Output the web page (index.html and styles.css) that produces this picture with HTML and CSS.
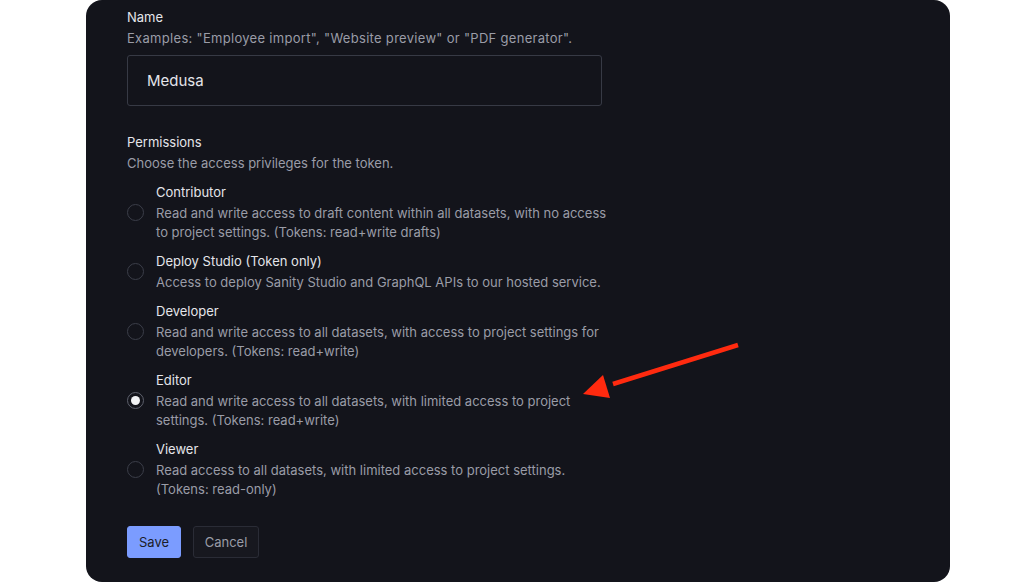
FILE: index.html
```html
<!DOCTYPE html>
<html>
<head>
<meta charset="utf-8">
<link rel="stylesheet" href="styles.css">
</head>
<body>
<div class="panel">
  <div class="field">
    <div class="label">Name</div>
    <div class="hint wide">Examples: "Employee import", "Website preview" or "PDF generator".</div>
    <div class="input">Medusa</div>
  </div>
  <div class="field perms">
    <div class="label">Permissions</div>
    <div class="hint">Choose the access privileges for the token.</div>
    <div class="options">
      <div class="option">
        <span class="radio"></span>
        <div class="text">
          <div class="title">Contributor</div>
          <div class="desc">Read and write access to draft content within all datasets, with no access to project settings. (Tokens: read+write drafts)</div>
        </div>
      </div>
      <div class="option">
        <span class="radio"></span>
        <div class="text">
          <div class="title">Deploy Studio (Token only)</div>
          <div class="desc">Access to deploy Sanity Studio and GraphQL APIs to our hosted service.</div>
        </div>
      </div>
      <div class="option">
        <span class="radio"></span>
        <div class="text">
          <div class="title">Developer</div>
          <div class="desc">Read and write access to all datasets, with access to project settings for developers. (Tokens: read+write)</div>
        </div>
      </div>
      <div class="option">
        <span class="radio checked"></span>
        <div class="text">
          <div class="title">Editor</div>
          <div class="desc">Read and write access to all datasets, with limited access to project settings. (Tokens: read+write)</div>
        </div>
      </div>
      <div class="option">
        <span class="radio"></span>
        <div class="text">
          <div class="title">Viewer</div>
          <div class="desc">Read access to all datasets, with limited access to project settings. (Tokens: read-only)</div>
        </div>
      </div>
    </div>
  </div>
  <div class="actions">
    <button class="btn primary">Save</button>
    <button class="btn secondary">Cancel</button>
  </div>
  <svg class="arrow" width="170" height="70" viewBox="0 0 170 70">
    <line x1="155" y1="14" x2="30" y2="53" stroke="#ff2a0f" stroke-width="4.5"/>
    <polygon points="0,63 20,44 27,67" fill="#ff2a0f"/>
  </svg>
</div>
</body>
</html>
```
FILE: styles.css
```css
html, body {
  margin: 0;
  padding: 0;
  background: #ffffff;
}
body {
  font-family: Inter, "Liberation Sans", sans-serif;
  font-size: 13px;
  width: 1035px;
  height: 582px;
  overflow: hidden;
}
.panel {
  position: relative;
  margin-left: 86px;
  width: 864px;
  height: 582px;
  box-sizing: border-box;
  background: #13141b;
  border-radius: 16px;
  padding: 7px 41px 0 41px;
}
.label {
  color: #e4e5ea;
  line-height: 20px;
}
.hint {
  color: #9a9ca7;
  line-height: 20px;
  margin-top: 1px;
}
.hint.wide {
  letter-spacing: 0.3px;
}
.input {
  margin-top: 7px;
  width: 475px;
  height: 51px;
  box-sizing: border-box;
  border: 1px solid #373a45;
  border-radius: 3px;
  padding-left: 19px;
  display: flex;
  align-items: center;
  color: #e4e5ea;
  font-size: 15px;
}
.perms {
  margin-top: 26px;
}
.options {
  margin-top: 9px;
  display: flex;
  flex-direction: column;
  gap: 9px;
}
.option {
  display: flex;
  align-items: center;
  gap: 12px;
}
.radio {
  flex: none;
  width: 17px;
  height: 17px;
  box-sizing: border-box;
  border: 1px solid #3b3e49;
  border-radius: 50%;
  display: flex;
  align-items: center;
  justify-content: center;
}
.radio.checked {
  border-color: #5d606c;
}
.radio.checked::after {
  content: "";
  width: 9px;
  height: 9px;
  border-radius: 50%;
  background: #f2f3f5;
}
.text {
  width: 456px;
}
.title {
  color: #e4e5ea;
  line-height: 20px;
}
.desc {
  color: #9a9ca7;
  line-height: 19px;
  margin-top: 2px;
}
.actions {
  margin-top: 27px;
  display: flex;
  gap: 12px;
}
.btn {
  font-family: Inter, "Liberation Sans", sans-serif;
  font-size: 13px;
  height: 32px;
  border-radius: 3px;
  padding: 0;
  cursor: pointer;
}
.primary {
  background: #7b9cff;
  color: #1b1d29;
  border: 1px solid #7b9cff;
  width: 54px;
}
.secondary {
  background: #17181f;
  color: #9a9ca7;
  border: 1px solid #2a2c36;
  width: 66px;
}
.arrow {
  position: absolute;
  left: 497px;
  top: 331px;
}
```
